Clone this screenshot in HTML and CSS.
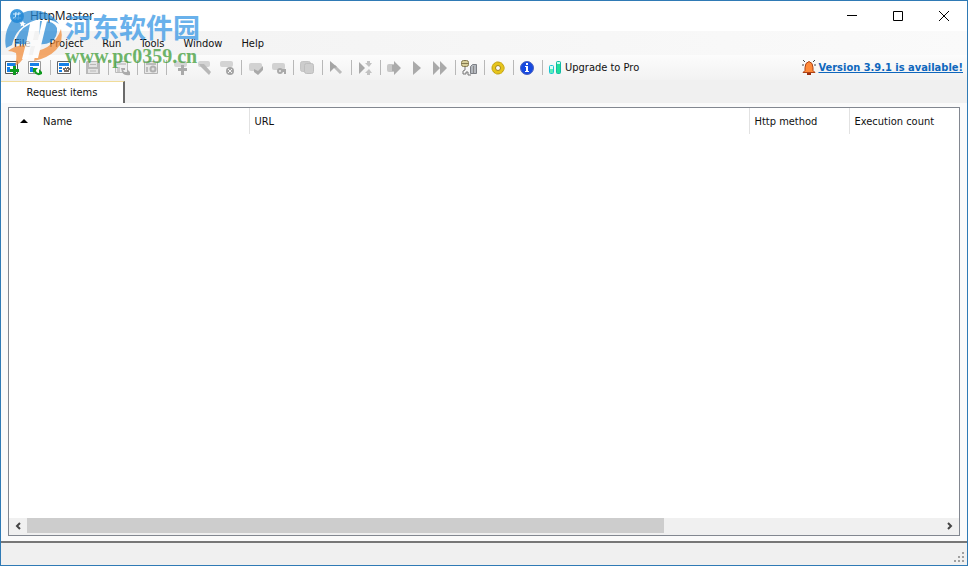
FILE: index.html
```html
<!DOCTYPE html>
<html lang="en">
<head>
<meta charset="utf-8">
<title>HttpMaster</title>
<link rel="stylesheet" href="styles.css">
</head>
<body>
<div class="window">
  <header class="titlebar">
    <svg class="app-icon" viewBox="0 0 16 16"><circle cx="8" cy="8" r="7" fill="#3f9be0"/><path d="M7 4L6 12M10 4L9 12M4 6h8M4 10h8" stroke="#d8efff" fill="none"/></svg>
    <h1 class="title">HttpMaster</h1>
    <div class="captions">
      <button class="caption" aria-label="Minimize"><svg viewBox="0 0 12 12"><path d="M1 5.500h10" /></svg></button>
      <button class="caption" aria-label="Maximize"><svg viewBox="0 0 12 12"><path d="M1.500 1.500h9v9h-9z"/></svg></button>
      <button class="caption" aria-label="Close"><svg viewBox="0 0 12 12"><path d="M1 1l10 10M11 1L1 11"/></svg></button>
    </div>
  </header>
  <nav class="menubar">
    <button>File</button><button>Project</button><button>Run</button><button>Tools</button><button>Window</button><button>Help</button>
  </nav>
  <div class="toolbar">
    <button class="tool" aria-label="New project"><svg viewBox="0 0 16 16"><path d="M1.500 1.500h12v12h-12z" fill="#fff" stroke="#555"/><path d="M3 3h9v3H3zM3 7h3v5H3z" fill="#1681e8"/><path d="M9 6h3v3h3v3h-3v3H9v-3H6V9h3z" fill="#109a20"/></svg></button>
    <button class="tool" aria-label="Open project"><svg viewBox="0 0 16 16"><path d="M1.500 1.500h12v12h-12z" fill="#fff" stroke="#999"/><path d="M3 3h9v3H3zM3 7h3v5H3z" fill="#1681e8"/><path d="M6 8h5l-2 2q0 3 3 3V9l3 3v2q-5 3-8-2l-1 1z" fill="#109a20"/></svg></button>
    <span class="sep"></span>
    <button class="tool" aria-label="Project properties"><svg viewBox="0 0 16 16"><path d="M1.500 1.500h13v12h-13z" fill="#fff" stroke="#666"/><path d="M3 3h10v3H3zM3 7h3v2H3zM3 10h3v2H3z" fill="#1681e8"/><path d="M7 8h2V7h1v1h1V7h2v1h1v2h-1v2H8v-2H7z" fill="#776d66"/><path d="M9 9h1v1H9zM11 9h1v1h-1z" fill="#fff"/></svg></button>
    <span class="sep"></span>
    <button class="tool" aria-label="Save" disabled><svg viewBox="0 0 16 16"><path d="M2 1h12l1 1v12H1V2z" fill="#b9b9b9"/><path d="M4 2h8v5H4zM3 9h10v4H3z" fill="#e2e2e2"/><path d="M5 4.500h6M5 11h6" stroke="#b9b9b9"/></svg></button>
    <span class="sep"></span>
    <button class="tool" aria-label="Reload" disabled><svg viewBox="0 0 16 16"><path d="M1.500 1.500h12v11h-12z" fill="#eee" stroke="#bbb"/><path d="M3 3h9v2H3zM3 7h3v5H3z" fill="#ccc"/><path d="M7 8h4v2H9q1 3 4 2V9l3 3v3q-6 1-8-3z" fill="#aaa"/></svg></button>
    <span class="sep"></span>
    <button class="tool" aria-label="Settings" disabled><svg viewBox="0 0 16 16"><path d="M1.500 1.500h13v12h-13z" fill="#e8e8e8" stroke="#b5b5b5"/><path d="M3 3h10v2H3zM3 7h2v5H3z" fill="#bcbcbc"/><circle cx="10" cy="9" r="2.500" fill="#ddd" stroke="#b0b0b0" stroke-width="2"/></svg></button>
    <span class="sep"></span>
    <button class="tool" aria-label="Add item" disabled><svg viewBox="0 0 16 16"><rect x="2" y="1" width="13" height="6" rx="2" fill="#d4d4d4"/><path d="M9 5h3v3h3v3h-3v4H9v-4H6V8h3z" fill="#aaa"/></svg></button>
    <button class="tool" aria-label="Edit item" disabled><svg viewBox="0 0 16 16"><rect x="3" y="1" width="12" height="6" rx="2" fill="#d4d4d4"/><path d="M4 4h5l7 8-2 3-8-8z" fill="#b8b8b8"/></svg></button>
    <button class="tool" aria-label="Delete item" disabled><svg viewBox="0 0 16 16"><rect x="2" y="1" width="13" height="6" rx="2" fill="#d4d4d4"/><circle cx="12" cy="11" r="4" fill="#a5a5a5"/><path d="M10 9l4 4M14 9l-4 4" stroke="#f3f3f3"/></svg></button>
    <span class="sep"></span>
    <button class="tool" aria-label="Validate" disabled><svg viewBox="0 0 16 16"><rect x="2" y="3" width="13" height="8" rx="2" fill="#d2d2d2"/><path d="M7 9l4 2 5-5v4l-5 5-4-3z" fill="#aaa"/></svg></button>
    <button class="tool" aria-label="Chain" disabled><svg viewBox="0 0 16 16"><rect x="2" y="3" width="13" height="7" rx="2" fill="#d2d2d2"/><circle cx="10" cy="11" r="2" fill="#eee" stroke="#aaa" stroke-width="2"/><path d="M11 9h5v5h-2v-2h-2z" fill="#aaa"/></svg></button>
    <span class="sep"></span>
    <button class="tool" aria-label="Copy" disabled><svg viewBox="0 0 16 16"><rect x="1.500" y="1.500" width="10" height="10" rx="2" fill="#ccc" stroke="#c4c4c4"/><rect x="5.500" y="3.500" width="9" height="10" rx="2" fill="#cecece" stroke="#bebebe"/></svg></button>
    <span class="sep"></span>
    <button class="tool" aria-label="Select" disabled><svg viewBox="0 0 16 16"><path d="M6 6l7 7" stroke="#bbb" stroke-width="3"/><path d="M2 1l7 6-3 1-4 4z" fill="#a4a4a4"/></svg></button>
    <span class="sep"></span>
    <button class="tool" aria-label="Run group" disabled><svg viewBox="0 0 16 16"><path d="M2 2l6 6-6 6z" fill="#a8a8a8"/><path d="M10 1h3v2h2l-3 4-4-4h2zM10 15h3v-2h2l-3-4-4 4h2z" fill="#c2c2c2"/></svg></button>
    <span class="sep"></span>
    <button class="tool" aria-label="Run from" disabled><svg viewBox="0 0 16 16"><rect x="1" y="4" width="9" height="8" rx="2" fill="#c8c8c8"/><path d="M8 1l7 7-7 7v-4H6V5h2z" fill="#ababab"/></svg></button>
    <button class="tool" aria-label="Run" disabled><svg viewBox="0 0 16 16"><path d="M4 1l8 7-8 7z" fill="#aaa"/></svg></button>
    <button class="tool" aria-label="Run all" disabled><svg viewBox="0 0 16 16"><path d="M1 1l7 7-7 7zM8 1l7 7-7 7z" fill="#aaa"/></svg></button>
    <span class="sep"></span>
    <button class="tool" aria-label="Connection"><svg viewBox="0 0 16 16"><rect x=".5" y=".5" width="7" height="6" rx="2" fill="#d8cf9a" stroke="#857a50"/><path d="M1 3.500h6" stroke="#857a50"/><path d="M4 7v3l-2 1v3h3v-2h2v3h3" fill="none" stroke="#777"/><path d="M9.500 6.500l2-2h4v9h-6z" fill="#b4b8be" stroke="#7d8086"/><path d="M12.500 6v7" stroke="#888"/></svg></button>
    <span class="sep"></span>
    <button class="tool" aria-label="Options"><svg viewBox="0 0 16 16"><circle cx="8" cy="8" r="6" fill="#e7c51b" stroke="#b99a12"/><circle cx="8" cy="8" r="6" fill="none" stroke="#e3c42c" stroke-dasharray="2 3"/><circle cx="8" cy="8" r="2.500" fill="#fafafa" stroke="#a38618"/></svg></button>
    <span class="sep"></span>
    <button class="tool" aria-label="About"><svg viewBox="0 0 16 16"><circle cx="8" cy="8" r="6.500" fill="#1649e0" stroke="#4c62bd"/><path d="M7 3h2v2H7zM6 6h3v5h1v1H6v-1h1V7H6z" fill="#fff"/></svg></button>
    <span class="sep"></span>
    <button class="upgrade"><svg viewBox="0 0 16 16"><rect x="1.500" y="5.500" width="4" height="8" rx="1" fill="#dffcf7" stroke="#16c6d0"/><path d="M2 9h3v4H2z" fill="#5aeeb8"/><rect x="8.500" y="1.500" width="4" height="12" rx="1" fill="#22df9b" stroke="#12b9a4"/><path d="M9 2h3v2H9z" fill="#c6fff0"/></svg>Upgrade to Pro</button>
    <a class="update" href="#"><svg viewBox="0 0 16 16"><path d="M8 1.500q4 1 4 6v3l2 2H2l2-2v-3q0-5 4-6z" fill="#ff8a3a" stroke="#ad4316"/><path d="M6 13h4v2H6z" fill="#9c3010"/><path d="M2 0l2 2M14 0l-2 2M1 5h2M13 5h2" stroke="#444"/></svg><span>Version 3.9.1 is available!</span></a>
  </div>
  <div class="tabs"><button class="tab">Request items</button></div>
  <main class="panel">
    <div class="list">
      <table>
        <colgroup><col class="c-name"><col class="c-url"><col class="c-method"><col></colgroup>
        <thead><tr><th><svg class="sort" viewBox="0 0 8 4"><path d="M0 4l4-4 4 4z"/></svg>Name</th><th>URL</th><th>Http method</th><th>Execution count</th></tr></thead>
      </table>
      <div class="scroll">
        <button aria-label="Scroll left"><svg viewBox="0 0 8 8"><path d="M6 1L3 4l3 3"/></svg></button>
        <div class="track"><div class="thumb" style="width: 69.7%"></div></div>
        <button aria-label="Scroll right"><svg viewBox="0 0 8 8"><path d="M2 1l3 3-3 3"/></svg></button>
      </div>
    </div>
  </main>
  <footer class="status"><svg viewBox="0 0 12 12"><path d="M8 0h2v2H8zM4 4h2v2H4zM8 4h2v2H8zM0 8h2v2H0zM4 8h2v2H4zM8 8h2v2H8z" fill="#a0a0a0"/></svg></footer>
  <div class="watermark">
    <svg viewBox="0 0 60 58">
      <path d="M2 39Q-1 24 8 11 20-1 36 2q13 3 19 13Q44 8 32 11 12 17 8 36z" fill="#2387d4"/>
      <path d="M11 35Q13 21 26 15l-4 20zM36 12q14-1 17 7 1 9-6 14-6 3-12 2z" fill="#2387d4"/>
      <path d="M57 20q3 13-5 21-8 8-22 11l2-10q18-3 25-22zM4 42q9-7 20-5-2 14-13 20 2-8 1-13-4-2-8-2z" fill="#f28a35"/>
      <path d="M27 15l6-3-4 19h5l4-19h5l-9 37h-6l3-12h-4l-3 13h-6z" fill="#fff"/>
      <path d="M19 12l1 2 2 .5-2 1 .5 2.500-2-1.500-2 1 .5-2-1.500-2h2z" fill="#fff"/>
    </svg>
    <div class="wm-text"><span class="wm-name" lang="zh">河东软件园</span><span class="wm-site">www.pc0359.cn</span></div>
  </div>
</div>
</body>
</html>
```
FILE: styles.css
```css
* { box-sizing: border-box; }
body { margin: 0; font: 11px/14px "DejaVu Sans Condensed", "Noto Sans", sans-serif; color: #111; }
button { font: inherit; color: inherit; background: none; border: 0; padding: 0; margin: 0; }
svg { display: block; flex: none; }
.window { position: relative; display: flex; flex-direction: column; height: 100vh; border: 1px solid #2f7ab5; background: #f0f0f0; }
.titlebar { display: flex; align-items: center; height: 30px; flex: none; background: #fff; padding-left: 8px; }
.app-icon { width: 16px; height: 16px; }
.title { margin: 0 0 0 5px; font: 12px/16px "Open Sans", sans-serif; }
.captions { display: flex; margin-left: auto; }
.caption { width: 46px; height: 28px; display: grid; place-items: center; }
.caption svg { width: 12px; height: 12px; fill: none; stroke: #000; }
.menubar { display: flex; flex: none; gap: 1px; height: 24px; align-items: center; padding: 1px 0 0 4px; background: linear-gradient(90deg, #f2f2f2, #fafafa); }
.menubar button { padding: 0 9px; }
.toolbar { display: flex; flex: none; align-items: center; height: 25px; padding: 0 4px 0 3px; background: linear-gradient(#fcfcfc, #f2f2f2); }
.tool { width: 23px; }
.toolbar svg { width: 16px; height: 16px; }
.sep { width: 6px; height: 15px; border-left: 1px solid #b8b8b8; }
.upgrade { display: flex; align-items: center; gap: 1px; }
.update { display: flex; align-items: center; gap: 1px; margin-left: auto; color: #0f67bd; font-weight: bold; }
.tabs { display: flex; flex: none; height: 23px; padding-top: 1px; }
.tab { width: 124px; background: #fff; border-top: 1px solid #f0dc9a; border-right: 2px solid #6a6a6a; }
.panel { flex: 1; display: flex; min-height: 0; padding: 4px 7px 5px; background: #fafafa; border-bottom: 2px solid #777; }
.list { flex: 1; display: flex; flex-direction: column; background: #fff; border: 1px solid #828790; }
table { width: 100%; table-layout: fixed; border-collapse: collapse; }
.c-name { width: 240px; } .c-url { width: 500px; } .c-method { width: 100px; }
th { height: 26px; padding: 2px 5px 0; font-weight: normal; text-align: left; border-right: 1px solid #e2e2e2; }
th:last-child { border: 0; }
.sort { display: inline-block; width: 8px; height: 4px; margin: 0 15px 2px 6px; }
.scroll { display: flex; height: 17px; padding-bottom: 2px; margin-top: auto; background: #f0f0f0; }
.scroll button { width: 18px; display: grid; place-items: center; }
.scroll svg { width: 8px; height: 8px; fill: none; stroke: #444; stroke-width: 2; }
.track { flex: 1; display: flex; }
.thumb { background: #cdcdcd; }
.status { display: flex; flex: none; height: 22px; justify-content: flex-end; align-items: flex-end; padding: 0 1px 1px 0; }
.status svg { width: 12px; height: 12px; }
.watermark { position: absolute; left: 3px; top: 8px; display: flex; gap: 1px; pointer-events: none; opacity: .72; }
.watermark svg { width: 60px; height: 58px; }
.wm-text { display: flex; flex-direction: column; }
.wm-name { font: bold 27px/36px "Noto Sans CJK SC", sans-serif; color: #3094e4; }
.wm-site { font: bold 20px/22px "Liberation Serif", serif; color: #3a9a32; }
```
